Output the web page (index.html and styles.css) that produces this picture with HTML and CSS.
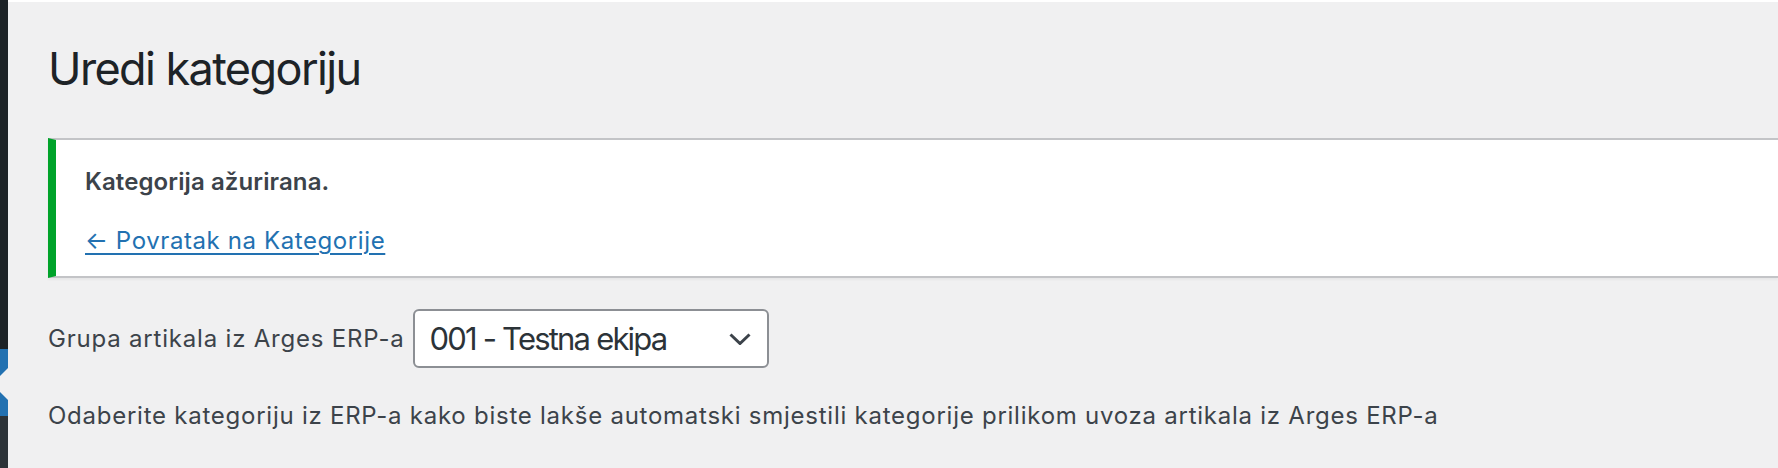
FILE: index.html
```html
<!DOCTYPE html>
<html lang="hr">
<head>
<meta charset="utf-8">
<title>Uredi kategoriju</title>
<link rel="stylesheet" href="styles.css">
</head>
<body>
<div class="layout">
  <nav class="sidebar">
    <div class="menu-top"></div>
    <div class="menu-current"></div>
    <div class="menu-sub"></div>
  </nav>
  <main class="content">
    <div class="topline"></div>
    <div class="wrap">
      <h1 class="page-title">Uredi kategoriju</h1>
      <div class="notice">
        <p class="notice-msg">Kategorija ažurirana.</p>
        <p class="notice-link"><a href="#">← Povratak na Kategorije</a></p>
      </div>
      <div class="field-row">
        <label class="field-label">Grupa artikala iz Arges ERP-a</label>
        <div class="select">
          <span class="select-value">001 - Testna ekipa</span>
          <svg class="chevron" width="22" height="12" viewBox="0 0 22 12"><path d="M1.5 1.5 L11 10.5 L20.5 1.5" fill="none" stroke="#3c434a" stroke-width="3"/></svg>
        </div>
      </div>
      <p class="description">Odaberite kategoriju iz ERP-a kako biste lakše automatski smjestili kategorije prilikom uvoza artikala iz Arges ERP-a</p>
    </div>
  </main>
</div>
</body>
</html>
```
FILE: styles.css
```css
html, body {
  margin: 0;
  padding: 0;
  height: 100%;
  overflow: hidden;
}
body {
  font-family: "Inter", "Noto Sans", sans-serif;
  background: #f0f0f1;
}
.layout {
  display: flex;
  height: 468px;
}
.sidebar {
  width: 8px;
  flex: 0 0 8px;
  display: flex;
  flex-direction: column;
  overflow: hidden;
}
.menu-top {
  height: 349px;
  background: #1d2327;
}
.menu-current {
  height: 67px;
  background: #2271b1;
  position: relative;
}
.menu-current::after {
  content: "";
  position: absolute;
  right: 0;
  top: 19px;
  width: 0;
  height: 0;
  border-right: 16px solid #f0f0f1;
  border-top: 16px solid transparent;
  border-bottom: 16px solid transparent;
}
.menu-sub {
  flex: 1;
  background: #2c3338;
}
.content {
  flex: 1;
  background: #f0f0f1;
  overflow: hidden;
}
.topline {
  height: 2px;
  background: #ffffff;
}
.wrap {
  padding-left: 40px;
}
.page-title {
  margin: 37px 0 0;
  font-size: 45px;
  line-height: 60px;
  font-weight: 400;
  letter-spacing: -1.6px;
  color: #1d2327;
}
.notice {
  margin-top: 39px;
  background: #fff;
  border-left: 8px solid #00a32a;
  border-top: 2px solid #c3c4c7;
  border-bottom: 2px solid #c3c4c7;
  box-shadow: 0 2px 2px rgba(0, 0, 0, 0.04);
  padding: 24px 24px 17px 29px;
  display: flex;
  flex-direction: column;
  gap: 23px;
}
.notice p {
  margin: 0;
  font-size: 24px;
  line-height: 36px;
  color: #3c434a;
}
.notice-msg {
  font-weight: 600;
  letter-spacing: 0.1px;
}
.notice-link {
  letter-spacing: 0.6px;
}
.notice-link a {
  color: #2271b1;
  text-decoration: underline;
  text-underline-offset: 4px;
  text-decoration-thickness: 2px;
}
.field-row {
  margin-top: 31px;
  display: flex;
  align-items: center;
  gap: 8px;
}
.field-label {
  font-size: 24px;
  line-height: 34px;
  letter-spacing: 0.8px;
  color: #3c434a;
}
.select {
  box-sizing: border-box;
  width: 356px;
  height: 59px;
  background: #fff;
  border: 2px solid #8c8f94;
  border-radius: 6px;
  display: flex;
  align-items: center;
  justify-content: space-between;
  padding: 0 16px 0 15px;
}
.select-value {
  font-size: 31px;
  line-height: 40px;
  letter-spacing: -1.8px;
  color: #2c3338;
}
.chevron {
  display: block;
}
.description {
  margin: 31px 0 0;
  font-size: 24px;
  line-height: 34px;
  letter-spacing: 0.75px;
  color: #3c434a;
}
```
